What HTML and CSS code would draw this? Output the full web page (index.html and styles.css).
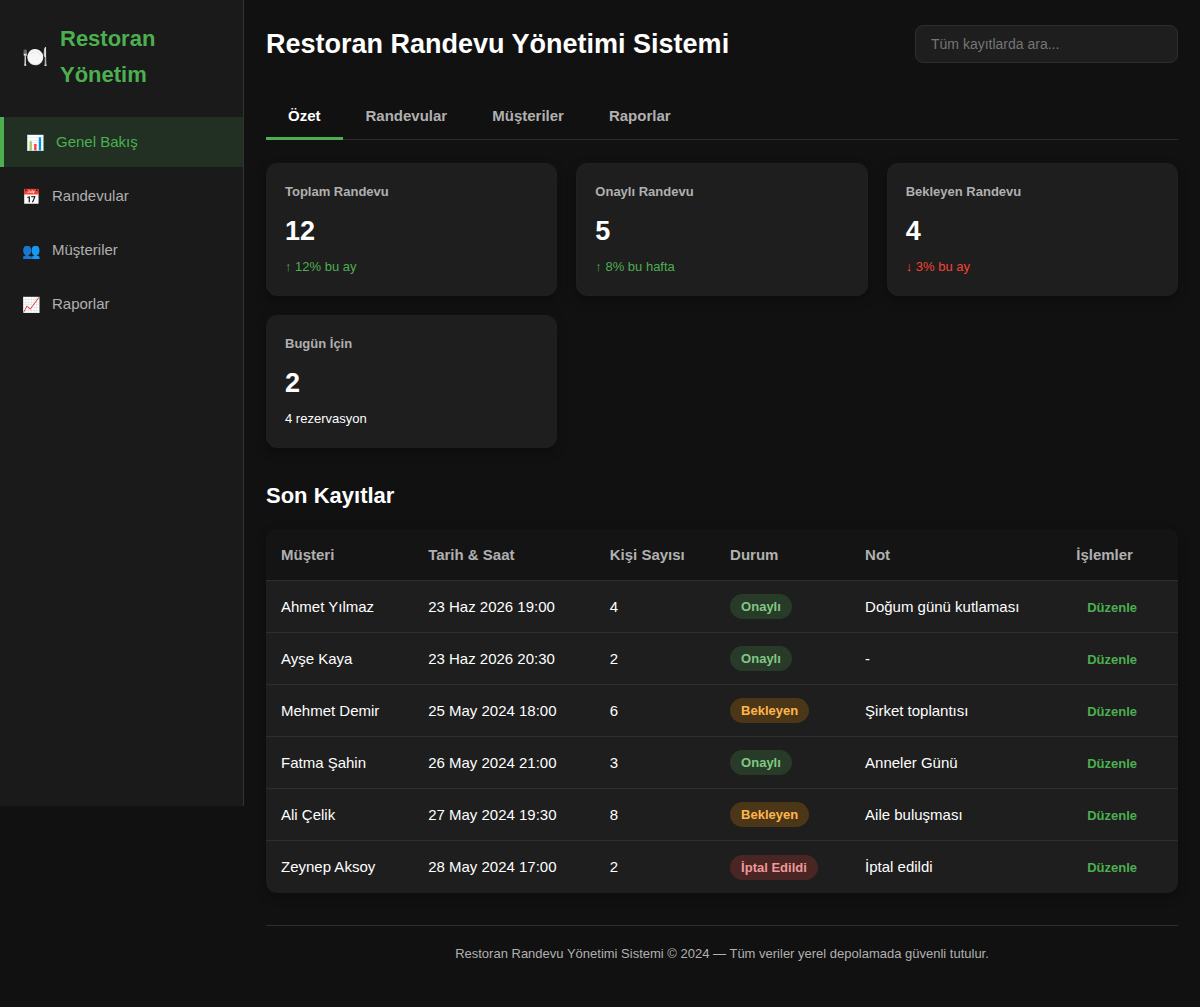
FILE: index.html
```html
<!DOCTYPE html>
<html lang="tr">
<head>
  <meta charset="UTF-8" />
  <title>Restoran Randevu Yönetimi Sistemi</title>
  <meta name="viewport" content="width=device-width, initial-scale=1.0" />
  <link rel="stylesheet" href="styles.css">
</head>
<body>
  <div class="app">
    <aside class="sidebar">
      <div class="logo">
        <span class="logo-icon">🍽️</span>
        <h2>Restoran Yönetim</h2>
      </div>
      <nav class="menu">
        <a href="#" class="menu-item active"><span class="menu-icon">📊</span>Genel Bakış</a>
        <a href="#" class="menu-item"><span class="menu-icon">📅</span>Randevular</a>
        <a href="#" class="menu-item"><span class="menu-icon">👥</span>Müşteriler</a>
        <a href="#" class="menu-item"><span class="menu-icon">📈</span>Raporlar</a>
      </nav>
    </aside>

    <main class="main">
      <header class="header">
        <h1>Restoran Randevu Yönetimi Sistemi</h1>
        <input type="search" class="search" placeholder="Tüm kayıtlarda ara..." aria-label="Tüm kayıtlarda ara" />
      </header>

      <div class="tabs">
        <button type="button" class="tab active">Özet</button>
        <button type="button" class="tab">Randevular</button>
        <button type="button" class="tab">Müşteriler</button>
        <button type="button" class="tab">Raporlar</button>
      </div>

      <section class="cards">
        <div class="card">
          <h3>Toplam Randevu</h3>
          <div class="value">12</div>
          <div class="trend up">↑ 12% bu ay</div>
        </div>
        <div class="card">
          <h3>Onaylı Randevu</h3>
          <div class="value">5</div>
          <div class="trend up">↑ 8% bu hafta</div>
        </div>
        <div class="card">
          <h3>Bekleyen Randevu</h3>
          <div class="value">4</div>
          <div class="trend down">↓ 3% bu ay</div>
        </div>
        <div class="card">
          <h3>Bugün İçin</h3>
          <div class="value">2</div>
          <div class="trend">4 rezervasyon</div>
        </div>
      </section>

      <section class="records">
        <h2>Son Kayıtlar</h2>
        <table>
          <thead>
            <tr>
              <th>Müşteri</th>
              <th>Tarih &amp; Saat</th>
              <th>Kişi Sayısı</th>
              <th>Durum</th>
              <th>Not</th>
              <th>İşlemler</th>
            </tr>
          </thead>
          <tbody>
            <tr>
              <td>Ahmet Yılmaz</td>
              <td>23 Haz 2026 19:00</td>
              <td>4</td>
              <td><span class="badge confirmed">Onaylı</span></td>
              <td>Doğum günü kutlaması</td>
              <td><button type="button" class="edit">Düzenle</button></td>
            </tr>
            <tr>
              <td>Ayşe Kaya</td>
              <td>23 Haz 2026 20:30</td>
              <td>2</td>
              <td><span class="badge confirmed">Onaylı</span></td>
              <td>-</td>
              <td><button type="button" class="edit">Düzenle</button></td>
            </tr>
            <tr>
              <td>Mehmet Demir</td>
              <td>25 May 2024 18:00</td>
              <td>6</td>
              <td><span class="badge pending">Bekleyen</span></td>
              <td>Şirket toplantısı</td>
              <td><button type="button" class="edit">Düzenle</button></td>
            </tr>
            <tr>
              <td>Fatma Şahin</td>
              <td>26 May 2024 21:00</td>
              <td>3</td>
              <td><span class="badge confirmed">Onaylı</span></td>
              <td>Anneler Günü</td>
              <td><button type="button" class="edit">Düzenle</button></td>
            </tr>
            <tr>
              <td>Ali Çelik</td>
              <td>27 May 2024 19:30</td>
              <td>8</td>
              <td><span class="badge pending">Bekleyen</span></td>
              <td>Aile buluşması</td>
              <td><button type="button" class="edit">Düzenle</button></td>
            </tr>
            <tr>
              <td>Zeynep Aksoy</td>
              <td>28 May 2024 17:00</td>
              <td>2</td>
              <td><span class="badge cancelled">İptal Edildi</span></td>
              <td>İptal edildi</td>
              <td><button type="button" class="edit">Düzenle</button></td>
            </tr>
          </tbody>
        </table>
      </section>

      <footer class="footer">
        Restoran Randevu Yönetimi Sistemi © 2024 — Tüm veriler yerel depolamada güvenli tutulur.
      </footer>
    </main>
  </div>
</body>
</html>
```
FILE: styles.css
```css
* {
  box-sizing: border-box;
  margin: 0;
  padding: 0;
}
body {
  background: #111;
  color: #fff;
  font-family: "Liberation Sans", Arial, sans-serif;
  font-size: 15px;
  line-height: 24px;
}
button,
input {
  font-family: inherit;
}
.app {
  display: flex;
  align-items: flex-start;
  min-height: 100vh;
}

/* Sidebar */
.sidebar {
  flex: 0 0 244px;
  height: 80vh;
  padding: 21px 0;
  background: #1a1a1a;
  border-right: 1px solid #333;
}
.logo {
  display: flex;
  align-items: center;
  gap: 12px;
  padding: 0 22px;
  margin-bottom: 24px;
  color: #4caf50;
}
.logo-icon {
  font-size: 21px;
}
.logo h2 {
  font-size: 22px;
  line-height: 36px;
}
.menu {
  display: flex;
  flex-direction: column;
  gap: 4px;
}
.menu-item {
  display: flex;
  align-items: center;
  gap: 11px;
  padding: 13px 22px;
  color: #b0b0b0;
  text-decoration: none;
}
.menu-item.active {
  color: #4caf50;
  background: rgba(76, 175, 80, 0.15);
  border-left: 4px solid #4caf50;
}
.menu-icon {
  padding-top: 2px;
  font-size: 15px;
  line-height: 22px;
}

/* Main */
.main {
  flex: 1;
  min-width: 0;
  padding: 23px 22px;
}
.header {
  display: flex;
  justify-content: space-between;
  align-items: center;
  margin-bottom: 30px;
}
.header h1 {
  font-size: 27px;
  line-height: 42px;
}
.search {
  width: 263px;
  padding: 10px 15px;
  border: 1px solid #2e2e2e;
  border-radius: 8px;
  background: #1e1e1e;
  color: #fff;
  font-size: 14px;
}
.tabs {
  display: flex;
  gap: 1px;
  margin-bottom: 23px;
  border-bottom: 1px solid #2e2e2e;
}
.tab {
  margin-bottom: -1px;
  padding: 12px 22px;
  border: none;
  border-bottom: 3px solid transparent;
  border-radius: 4px 4px 0 0;
  background: none;
  color: #b0b0b0;
  font-size: 15px;
  font-weight: bold;
  line-height: 18px;
  cursor: pointer;
}
.tab.active {
  color: #fff;
  border-bottom-color: #4caf50;
}

/* Cards */
.cards {
  display: grid;
  grid-template-columns: repeat(auto-fill, minmax(240px, 1fr));
  gap: 19px;
  margin-bottom: 30px;
}
.card {
  padding: 18px;
  border: 1px solid #202020;
  border-radius: 11px;
  background: #1e1e1e;
  box-shadow: 0 4px 11px rgba(0, 0, 0, 0.3);
}
.card h3 {
  margin-bottom: 8px;
  color: #b0b0b0;
  font-size: 13px;
  line-height: 20px;
}
.value {
  margin-bottom: 5px;
  font-size: 27px;
  font-weight: bold;
  line-height: 42px;
}
.trend {
  font-size: 13px;
  line-height: 20px;
}
.trend.up {
  color: #4caf50;
}
.trend.down {
  color: #f44336;
}

/* Table */
.records h2 {
  margin-bottom: 15px;
  font-size: 22px;
  line-height: 36px;
}
table {
  width: 100%;
  border-spacing: 0;
  border-radius: 11px;
  background: #1e1e1e;
  box-shadow: 0 4px 11px rgba(0, 0, 0, 0.3);
  overflow: hidden;
}
th,
td {
  height: 52px;
  padding: 12px 15px;
  border-bottom: 1px solid #2e2e2e;
  text-align: left;
}
th {
  background: #141414;
  color: #b0b0b0;
}
tbody tr:last-child td {
  border-bottom: none;
}
.badge {
  display: inline-block;
  padding: 3px 11px;
  border-radius: 20px;
  font-size: 13px;
  font-weight: bold;
  line-height: 19px;
}
.confirmed {
  background: rgba(76, 175, 80, 0.2);
  color: #81c784;
}
.pending {
  background: rgba(255, 152, 0, 0.2);
  color: #ffb74d;
}
.cancelled {
  background: rgba(244, 67, 54, 0.2);
  color: #ef9a9a;
}
.edit {
  padding: 4px 11px;
  border: none;
  background: none;
  color: #4caf50;
  font-size: 13px;
  font-weight: bold;
  cursor: pointer;
}

.footer {
  margin-top: 32px;
  padding-top: 18px;
  border-top: 1px solid #2e2e2e;
  color: #b0b0b0;
  font-size: 13px;
  line-height: 20px;
  text-align: center;
}
```
